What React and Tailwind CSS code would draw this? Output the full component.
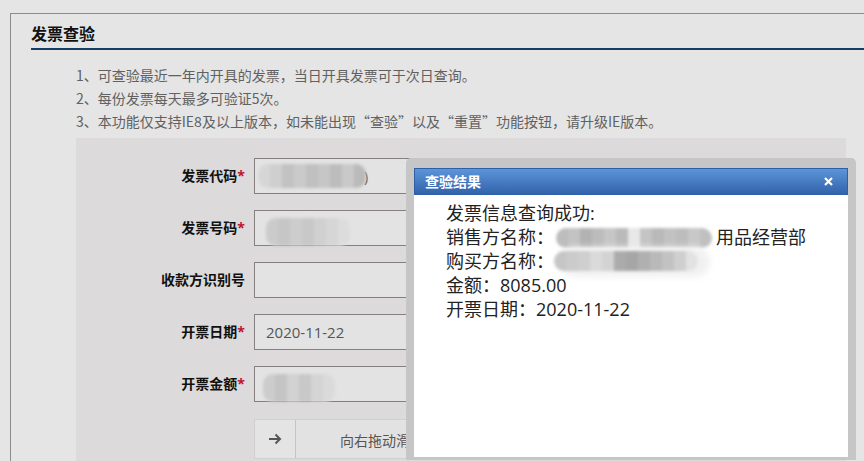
import React from "react";

const notes = [
  "1、可查验最近一年内开具的发票，当日开具发票可于次日查询。",
  "2、每份发票每天最多可验证5次。",
  "3、本功能仅支持IE8及以上版本，如未能出现“查验”以及“重置”功能按钮，请升级IE版本。",
];

// pixelated / smudged areas from the original capture
function Mosaic({ blocks, className = "" }) {
  return (
    <span className={"inline-flex items-stretch blur-[1.5px] rounded-[10px] overflow-hidden " + className}>
      {blocks.map((c, i) => (
        <span key={i} className={"block w-[12px] " + c} />
      ))}
    </span>
  );
}

function Field({ label, required, children }) {
  return (
    <div className="flex items-center h-[36px]">
      <div className="w-[169px] text-right text-[14px] font-bold text-[#111] leading-none">
        {label}
        {required && <span className="text-[#c0102a]">*</span>}
      </div>
      <div className="ml-[9px] w-[352px] h-full border border-[#867f7f] bg-[#e4e3e4] flex items-center relative">
        {children}
      </div>
    </div>
  );
}

export default function App() {
  return (
    <div className="relative w-[864px] h-[461px] overflow-hidden bg-[#e5e5e5] font-['Open_Sans','Noto_Sans_CJK_SC',sans-serif]">
      <div className="ml-[10px] mt-[13px] w-[900px] h-[500px] border-t border-l border-[#8c8c8c] pl-[20px]">
        {/* title */}
        <div className="pt-[10px] pb-[4px] border-b-2 border-[#163e64]">
          <h1 className="text-[16px] leading-[20px] font-bold text-[#111]">发票查验</h1>
        </div>

        <div className="pl-[45px]">
          <ul className="mt-[14px] text-[14px] leading-[23px] text-[#616161] font-['Noto_Sans_CJK_SC',sans-serif]">
            {notes.map((n) => (
              <li key={n}>{n}</li>
            ))}
          </ul>

          {/* form */}
          <div className="mt-[5px] w-[770px] h-[340px] bg-[#dcdadb] pt-[20px] flex flex-col gap-[16px]">
            <Field label="发票代码" required>
              <Mosaic
                className="ml-[3px] h-[24px]"
                blocks={["bg-[#d6d6d6]", "bg-[#cfcfcf]", "bg-[#c2c2c2]", "bg-[#cacaca]", "bg-[#c0c0c0]", "bg-[#c6c6c6]", "bg-[#bdbdbd]", "bg-[#c9c9c9]", "bg-[#bababa]"]}
              />
              <span className="text-[14px] text-[#555] -ml-[2px]">)</span>
            </Field>
            <Field label="发票号码" required>
              <Mosaic
                className="ml-[11px] mt-[8px] h-[28px]"
                blocks={["bg-[#cbcbcb]", "bg-[#c6c6c6]", "bg-[#cdcdcd]", "bg-[#c8c8c8]", "bg-[#d0d0d0]", "bg-[#d6d6d6]", "bg-[#dcdcdc]"]}
              />
            </Field>
            <Field label="收款方识别号" />
            <Field label="开票日期" required>
              <span className="pl-[11px] text-[15px] text-[#555]">2020-11-22</span>
            </Field>
            <Field label="开票金额" required>
              <Mosaic
                className="ml-[8px] mt-[8px] h-[28px]"
                blocks={["bg-[#cccccc]", "bg-[#c4c4c4]", "bg-[#d2d2d2]", "bg-[#c8c8c8]", "bg-[#d4d4d4]", "bg-[#dadada]"]}
              />
            </Field>

            {/* slider */}
            <div className="flex mt-[1px]">
              <div className="w-[169px]" />
              <div className="ml-[9px] w-[352px] h-[40px] flex bg-[#e2e2e3] border border-[#d0d0d0]">
                <div className="w-[41px] h-full bg-[#e4e4e4] border-r border-[#c4c4c4] flex items-center justify-center text-[#555]">
                  <svg width="14" height="12" viewBox="0 0 14 12" fill="none" stroke="currentColor" strokeWidth="2">
                    <path d="M1 6h11M7.5 1.5 12 6l-4.5 4.5" />
                  </svg>
                </div>
                <div className="pl-[44px] pt-[10px] text-[14px] text-[#555]">向右拖动滑块验证</div>
              </div>
            </div>
          </div>
        </div>
      </div>

      {/* result dialog */}
      <div className="absolute left-[406px] top-[158px] w-[450px] h-[302px] bg-[#c6c6c6] rounded-t-[5px] px-[8px] pt-[10px] pb-[3px] flex flex-col">
        <div className="h-[27px] flex items-center justify-between px-[10px] border border-[#2f5fa6] bg-gradient-to-b from-[#5d95d8] to-[#3263ab]">
          <span className="text-[14px] font-bold text-white">查验结果</span>
          <svg width="9" height="9" viewBox="0 0 9 9" className="mr-[4px]" stroke="white" strokeWidth="2.2">
            <path d="M1 1l7 7M8 1 1 8" />
          </svg>
        </div>
        <div className="flex-1 bg-white pl-[32px] pt-[6px] text-[18px] leading-[24px] text-[#222]">
          <div>发票信息查询成功:</div>
          <div className="flex items-center">
            <span>销售方名称：</span>
            <span className="relative w-[160px] h-[24px] ml-[2px]">
              <Mosaic
                className="absolute left-0 top-[3px] h-[20px]"
                blocks={["bg-[#bdbdbd]", "bg-[#c3c3c3]", "bg-[#b2b2b2]", "bg-[#bcbcbc]", "bg-[#c6c6c6]", "bg-[#bababa]", "bg-[#e8e8e8]", "bg-[#c4c4c4]", "bg-[#b9b9b9]", "bg-[#c2c2c2]", "bg-[#bdbdbd]", "bg-[#c8c8c8]", "bg-[#c0c0c0]"]}
              />
              <span className="absolute left-[4px] top-[22px] w-[150px] h-[30px] rounded-full bg-[#f1f1f1] blur-[3px]" />
            </span>
            <span>用品经营部</span>
          </div>
          <div className="flex items-center">
            <span>购买方名称：</span>
            <span className="relative w-[150px] h-[24px]">
              <Mosaic
                className="absolute left-0 top-[2px] h-[20px]"
                blocks={["bg-[#c6c6c6]", "bg-[#cbcbcb]", "bg-[#cfcfcf]", "bg-[#dadada]", "bg-[#d3d3d3]", "bg-[#ababab]", "bg-[#a6a6a6]", "bg-[#b0b0b0]", "bg-[#b9b9b9]", "bg-[#c2c2c2]", "bg-[#cfcfcf]", "bg-[#e2e2e2]"]}
              />
            </span>
          </div>
          <div>金额：8085.00</div>
          <div>开票日期：2020-11-22</div>
        </div>
      </div>
    </div>
  );
}
